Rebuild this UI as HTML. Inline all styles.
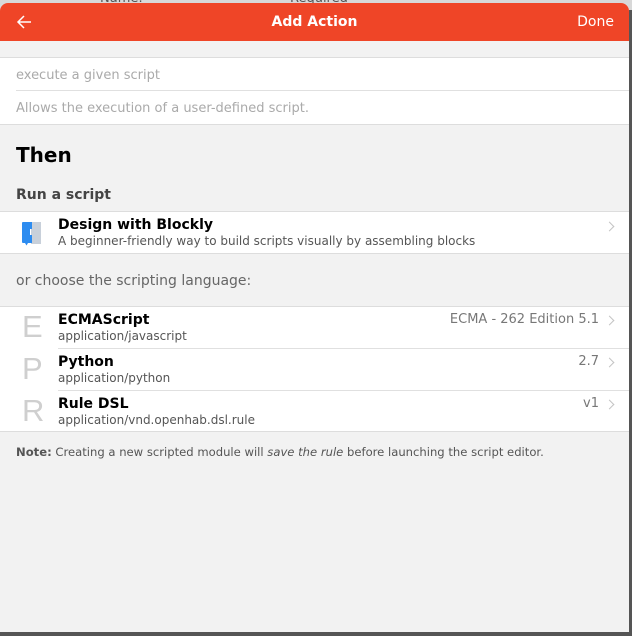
<!DOCTYPE html>
<html><head><meta charset="utf-8"><style>
*{margin:0;padding:0;box-sizing:border-box}
body{width:632px;height:636px;background:#555;font-family:"DejaVu Sans","Liberation Sans",sans-serif;position:relative;overflow:hidden}
.topstrip{position:absolute;left:0;top:0;width:632px;height:10px;background:#d8d8d8}
.topstrip span{position:absolute;font-size:13px;color:#555;top:-9px}
.panel{position:absolute;left:0;top:3px;width:629px;height:629px;background:#f2f2f2;border-radius:8px 8px 0 0;overflow:hidden}
.hdr{height:38px;background:#ef4527;color:#fff;position:relative}
.hdr .t{position:absolute;left:0;right:0;text-align:center;top:11px;font-weight:bold;font-size:14px}
.hdr .d{position:absolute;right:15px;top:11px;font-size:14px}
.hdr svg{position:absolute;left:16px;top:11px}
.abs{position:absolute;left:0;width:629px}
.w{background:#fff;border-top:1px solid #ddd;border-bottom:1px solid #ddd}
.ph{position:absolute;left:16px;font-size:13px;color:#aaa}
.ln{position:absolute;left:16px;right:0;height:1px;background:#e0e0e0}
.ttl{position:absolute;left:58px;font-weight:bold;font-size:14px;color:#000}
.sub{position:absolute;left:58px;font-size:12px;color:#555}
.rt{position:absolute;right:30px;font-size:13px;color:#777}
.chev{position:absolute;right:16px;width:7px;height:7px;border-right:1.3px solid #c4c4c4;border-top:1.3px solid #c4c4c4;transform:rotate(45deg)}
.let{position:absolute;left:22px;font-size:31px;color:#cfcfcf;font-family:"Liberation Sans",sans-serif;font-weight:normal;-webkit-text-stroke:0}
</style></head><body>
<div class="topstrip"><span style="left:100px">Name:</span><span style="left:290px">Required</span></div>
<div class="panel">
<div class="hdr">
<svg width="16" height="16" viewBox="0 0 16 16"><path d="M15 8H2M8 2L2 8l6 6" stroke="#fff" stroke-width="1.5" fill="none"/></svg>
<div class="t">Add Action</div><div class="d">Done</div></div>
<div class="abs w" style="top:54px;height:68px">
<div class="ph" style="top:10px">execute a given script</div>
<div class="ln" style="top:32px"></div>
<div class="ph" style="top:43px">Allows the execution of a user-defined script.</div>
</div>
<div class="abs" style="top:140px;left:16px;font-size:20px;font-weight:bold;color:#000">Then</div>
<div class="abs" style="top:184px;left:16px;font-size:14px;font-weight:bold;color:#444">Run a script</div>
<div class="abs w" style="top:208px;height:43px">
<svg style="position:absolute;left:20px;top:9px" width="24" height="26" viewBox="0 0 24 26"><rect x="11" y="1" width="10" height="22" fill="#c8d0da"/><path d="M2 2q0-1 1-1h9v7h-2v6h2v8H8l-1.5 2.5L5 22H3q-1 0-1-1z" fill="#2d8cf0"/></svg>
<div class="ttl" style="top:5px">Design with Blockly</div>
<div class="sub" style="top:22px">A beginner-friendly way to build scripts visually by assembling blocks</div>
<div class="chev" style="top:11px"></div>
</div>
<div class="abs" style="top:270px;left:16px;font-size:14px;color:#666">or choose the scripting language:</div>
<div class="abs w" style="top:303px;height:126px">
<div class="let" style="top:2px">E</div>
<div class="ttl" style="top:5px">ECMAScript</div>
<div class="sub" style="top:22px">application/javascript</div>
<div class="rt" style="top:5px">ECMA - 262 Edition 5.1</div>
<div class="chev" style="top:10px"></div>
<div class="ln" style="top:41px;left:58px"></div>
<div class="let" style="top:44px">P</div>
<div class="ttl" style="top:47px">Python</div>
<div class="sub" style="top:64px">application/python</div>
<div class="rt" style="top:47px">2.7</div>
<div class="chev" style="top:52px"></div>
<div class="ln" style="top:83px;left:58px"></div>
<div class="let" style="top:86px">R</div>
<div class="ttl" style="top:89px">Rule DSL</div>
<div class="sub" style="top:106px">application/vnd.openhab.dsl.rule</div>
<div class="rt" style="top:89px">v1</div>
<div class="chev" style="top:94px"></div>
</div>
<div class="abs" style="top:442px;left:16px;font-size:11.6px;color:#555"><b>Note:</b> Creating a new scripted module will <i>save the rule</i> before launching the script editor.</div>
</div>
</body></html>
